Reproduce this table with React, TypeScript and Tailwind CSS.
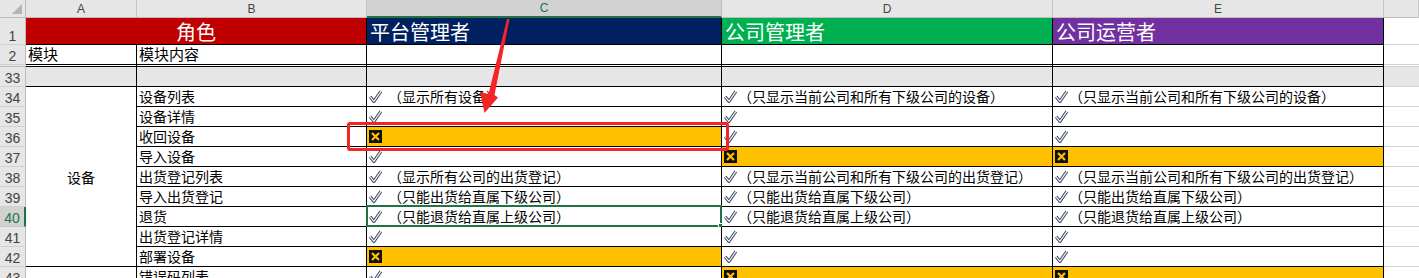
import type { ReactNode } from "react"

type Mark = { ok: boolean; note?: string }

const LABELS = [
  "设备列表",
  "设备详情",
  "收回设备",
  "导入设备",
  "出货登记列表",
  "导入出货登记",
  "退货",
  "出货登记详情",
  "部署设备",
  "错误码列表",
]

const PLATFORM: Mark[] = [
  { ok: true, note: "（显示所有设备）" },
  { ok: true },
  { ok: false },
  { ok: true },
  { ok: true, note: "（显示所有公司的出货登记）" },
  { ok: true, note: "（只能出货给直属下级公司）" },
  { ok: true, note: "（只能退货给直属上级公司）" },
  { ok: true },
  { ok: false },
  { ok: true },
]

const COMPANY: Mark[] = [
  { ok: true, note: "（只显示当前公司和所有下级公司的设备）" },
  { ok: true },
  { ok: true },
  { ok: false },
  { ok: true, note: "（只显示当前公司和所有下级公司的出货登记）" },
  { ok: true, note: "（只能出货给直属下级公司）" },
  { ok: true, note: "（只能退货给直属上级公司）" },
  { ok: true },
  { ok: true },
  { ok: false },
]

function CheckIcon() {
  return (
    <svg width="13" height="13" viewBox="0 0 13 13" className="shrink-0">
      <path d="M1.2 6.8 L4.9 11.4 L11.9 1.4" fill="none" stroke="#3c4866" strokeWidth="3.2" strokeLinejoin="miter" />
      <path d="M1.2 6.8 L4.9 11.4 L11.9 1.4" fill="none" stroke="#ffffff" strokeWidth="1.1" strokeLinejoin="miter" />
    </svg>
  )
}

function CrossIcon() {
  return (
    <svg width="13" height="13" viewBox="0 0 13 13" className="shrink-0">
      <rect width="13" height="13" fill="#111111" />
      <path d="M3 3 L10 10 M10 3 L3 10" stroke="#ffc000" strokeWidth="2.2" />
    </svg>
  )
}

function RowNum({ n, active }: { n?: number; active?: boolean }) {
  return (
    <div
      className={`flex items-end justify-center pb-[1px] border-b border-r font-['Liberation_Sans',sans-serif] text-[14px] leading-[14px] ${
        active
          ? "bg-[#d2d2d2] text-[#217346] border-b-[#c6c6c6] border-r-2 border-r-[#217346]"
          : "bg-[#e6e6e6] text-[#444444] border-b-[#d0d0d0] border-r-[#bdbdbd]"
      }`}
    >
      {n}
    </div>
  )
}

function ColHead({ label, active }: { label?: string; active?: boolean }) {
  return (
    <div
      className={`flex items-center justify-center border-r font-['Liberation_Sans',sans-serif] text-[12px] ${
        active
          ? "bg-[#d2d2d2] text-[#217346] border-r-[#bdbdbd] border-b-2 border-b-[#217346]"
          : "bg-[#e6e6e6] text-[#444444] border-r-[#c6c6c6] border-b border-b-[#bdbdbd]"
      }`}
    >
      {label}
    </div>
  )
}

function Cell({ children, className = "" }: { children?: ReactNode; className?: string }) {
  return (
    <div className={`flex items-center whitespace-nowrap border-r border-b border-black ${className}`}>{children}</div>
  )
}

function Spare({ className = "bg-white" }: { className?: string }) {
  return <div className={`border-b border-[#d4d4d4] ${className}`} />
}

function MarkCell({ mark, spaced, selected }: { mark: Mark; spaced?: boolean; selected?: boolean }) {
  return (
    <div
      className={`relative flex items-center whitespace-nowrap pl-[2px] border-r border-b border-black ${
        mark.ok ? "bg-white" : "bg-[#ffc000]"
      }`}
    >
      {mark.ok ? <CheckIcon /> : <CrossIcon />}
      {mark.note && <span className={spaced ? "ml-[6px]" : "ml-[1px]"}>{mark.note}</span>}
      {selected && (
        <div className="absolute -left-[1px] -top-[2px] -right-[1px] -bottom-[1px] border-2 border-[#217346]">
          <div className="absolute -right-[4px] -bottom-[4px] w-[6px] h-[6px] bg-[#217346] border border-white" />
        </div>
      )}
    </div>
  )
}

export default function App() {
  return (
    <div className="relative w-[1419px] h-[278px] overflow-hidden bg-white text-black font-['Noto_Sans_CJK_SC',sans-serif] text-[14px]">
      <div className="grid grid-cols-[26px_111px_230px_355px_331px_331px_1fr] grid-rows-[18px_27px_20px_2px_20px_repeat(10,20px)]">
        {/* column headers */}
        <div className="flex items-end justify-end p-[3px] bg-[#e6e6e6] border-r border-b border-[#bdbdbd]">
          <svg width="10" height="10" viewBox="0 0 10 10">
            <path d="M10 0 L10 10 L0 10 Z" fill="#b4b4b4" />
          </svg>
        </div>
        <ColHead label="A" />
        <ColHead label="B" />
        <ColHead label="C" active />
        <ColHead label="D" />
        <ColHead label="E" />
        <ColHead />

        {/* row 1: roles */}
        <RowNum n={1} />
        <div className="col-span-2 flex items-center justify-center pt-[1px] bg-[#c00000] text-white text-[20px] border-r border-b border-black">
          角色
        </div>
        <div className="flex items-center pl-[3px] pt-[2px] bg-[#002060] text-white text-[20px] border-r border-b border-black">
          平台管理者
        </div>
        <div className="flex items-center pl-[3px] pt-[2px] bg-[#00b050] text-white text-[20px] border-r border-b border-black">
          公司管理者
        </div>
        <div className="flex items-center pl-[3px] pt-[2px] bg-[#7030a0] text-white text-[20px] border-r border-b border-black">
          公司运营者
        </div>
        <Spare />

        {/* row 2 */}
        <RowNum n={2} />
        <Cell className="pl-[2px] text-[15px]">模块</Cell>
        <Cell className="pl-[2px] text-[15px]">模块内容</Cell>
        <Cell />
        <Cell />
        <Cell />
        <Spare />

        {/* frozen pane split */}
        <div className="bg-[#e6e6e6] border-r border-b border-[#bdbdbd]" />
        <Cell />
        <Cell />
        <Cell />
        <Cell />
        <Cell />
        <Spare />

        {/* row 33 */}
        <RowNum n={33} />
        <Cell className="bg-[#e7e6e6]" />
        <Cell className="bg-[#e7e6e6]" />
        <Cell className="bg-[#e7e6e6]" />
        <Cell className="bg-[#e7e6e6]" />
        <Cell className="bg-[#e7e6e6]" />
        <Spare className="bg-[#e7e6e6]" />

        {LABELS.map((label, i) => {
          const n = 34 + i
          return [
            <RowNum key={`n${n}`} n={n} active={n === 40} />,
            i === 0 ? (
              <Cell key="group" className="row-span-9 justify-center pt-[1px]">
                设备
              </Cell>
            ) : i === 9 ? (
              <Cell key="group2" />
            ) : null,
            <Cell key={`b${n}`} className="pl-[2px]">
              {label}
            </Cell>,
            <MarkCell key={`c${n}`} mark={PLATFORM[i]} spaced selected={n === 40} />,
            <MarkCell key={`d${n}`} mark={COMPANY[i]} />,
            <MarkCell key={`e${n}`} mark={COMPANY[i]} />,
            <Spare key={`f${n}`} />,
          ]
        })}
      </div>

      {/* annotation */}
      <div className="pointer-events-none absolute left-[347px] top-[122px] w-[382px] h-[29px] rounded-[3px] border-[3px] border-[#f52525]" />
      <svg className="pointer-events-none absolute left-0 top-0" width="1419" height="278">
        <polygon
          points="507,19 509.5,19 494.5,95 498,97.5 484.5,113 480,92 488.5,94"
          fill="#f52525"
        />
      </svg>
    </div>
  )
}
